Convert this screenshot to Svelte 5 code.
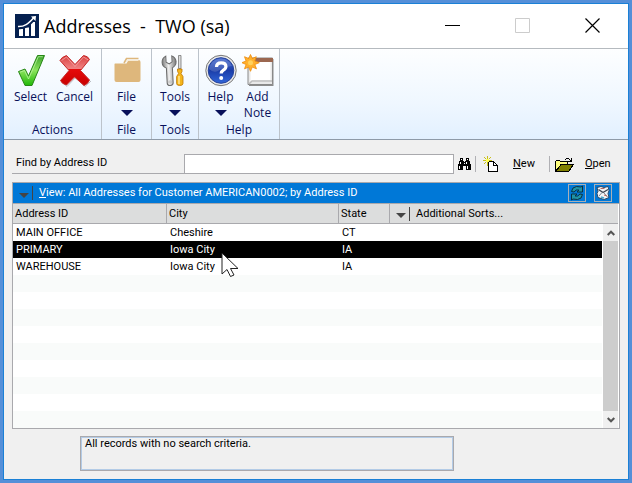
<script>
  const rows = [
    { id: 'MAIN OFFICE', city: 'Cheshire', state: 'CT' },
    { id: 'PRIMARY', city: 'Iowa City', state: 'IA', selected: true },
    { id: 'WAREHOUSE', city: 'Iowa City', state: 'IA' },
    ...Array.from({ length: 9 }, () => ({ id: '', city: '', state: '' }))
  ];
  let query = $state('');
</script>

<div class="desktop">
  <main class="window">
    <header class="titlebar">
      <svg class="logo" width="24" height="24" viewBox="0 0 24 24">
        <rect width="24" height="24" fill="#05204f" />
        <path d="M4 14.5h4V22H4zM10 13.5h4V22h-4zM16 8h4v14h-4z" fill="#fff" />
        <path d="M4 13.2c6 .3 9-2.200 14-7.800" fill="none" stroke="#05204f" stroke-width="4" />
        <path d="M3 12.600c6.500.3 10-2.600 15.500-8.600" fill="none" stroke="#fff" stroke-width="1.500" />
        <path d="M16 2.500l5-.5-.5 5z" fill="#fff" />
      </svg>
      <h1>Addresses &nbsp;-&nbsp; TWO (sa)</h1>
      <div class="caption">
        <button aria-label="Minimize">
          <svg width="16" height="16" viewBox="0 0 16 16"><path d="M0 7.500h15" stroke="#000" /></svg>
        </button>
        <button aria-label="Maximize" disabled>
          <svg width="16" height="16" viewBox="0 0 16 16"><path d="M.5.5h14v14H.5z" fill="none" stroke="#ccc" /></svg>
        </button>
        <button aria-label="Close">
          <svg width="16" height="16" viewBox="0 0 16 16"><path d="M.5.5l14 14M14.500.5l-14 14" stroke="#000" stroke-width="1.200" /></svg>
        </button>
      </div>
    </header>

    <nav class="ribbon">
      <section class="group actions">
        <div class="tools">
          <button class="tool">
            <svg width="32" height="34" viewBox="0 0 32 34">
              <defs><linearGradient id="g1" x1="0" y1="0" x2="0" y2="1"><stop offset="0" stop-color="#3da32c" /><stop offset=".5" stop-color="#8be35d" /><stop offset="1" stop-color="#20b808" /></linearGradient></defs>
              <path d="M3.500 18.500l6.500-2.500 3.500 7L22.500 2.500h7L17 32.500h-7z" fill="url(#g1)" stroke="#278716" stroke-width="1" stroke-linejoin="round" />
              <path d="M5 19.200l4.500-1.700 4 8.500L23.300 3.700h4.500" fill="none" stroke="#b9f29e" stroke-width=".8" />
            </svg>
            <span>Select</span>
          </button>
          <button class="tool">
            <svg width="32" height="34" viewBox="0 0 32 34">
              <defs><linearGradient id="r1" x1="0" y1="0" x2="0" y2="1"><stop offset="0" stop-color="#d94040" /><stop offset=".45" stop-color="#f18484" /><stop offset=".46" stop-color="#e60b0b" /><stop offset="1" stop-color="#c80000" /></linearGradient></defs>
              <path d="M2 28.500l6 5L17 24l9 9.500 6-5.500" fill="none" stroke="#b9bdc3" stroke-width="1" />
              <path d="M1 7.500Q2.500 4 7.500 2.500L16 11.500 24.500 2.500Q29 3 30.500 6.500L21.500 17.500 30.500 27Q29 31 25 32.500L15.500 24 7.500 32Q3 31 1.500 27.500L10 17.500z" fill="url(#r1)" stroke="#c52a2a" stroke-width="1" stroke-linejoin="round" />
              <path d="M2.500 7.500l5-3.500 8.500 9.500L24.500 4l4.500 2.800" fill="none" stroke="#f4a6a6" stroke-width=".8" />
            </svg>
            <span>Cancel</span>
          </button>
        </div>
        <h2>Actions</h2>
      </section>

      <section class="group file">
        <div class="tools">
          <button class="tool">
            <svg width="32" height="34" viewBox="0 0 32 34">
              <path d="M4 10.500h11.500l2-3.500h10q2 0 2 2v18q0 2-2 2H5.500q-2 0-2-2V11z" fill="#deb77c" />
              <path d="M13 10l2.500-4.500h12" fill="none" stroke="#deb77c" stroke-width="1.600" />
              <path d="M15 9.500l1.500-2h11" fill="none" stroke="#f6ead5" stroke-width="1" />
            </svg>
            <span>File</span>
            <i class="drop"></i>
          </button>
        </div>
        <h2>File</h2>
      </section>

      <section class="group kit">
        <div class="tools">
          <button class="tool">
            <svg width="32" height="34" viewBox="0 0 32 34">
              <defs><linearGradient id="w1"><stop offset="0" stop-color="#777" /><stop offset=".45" stop-color="#f1f1f1" /><stop offset="1" stop-color="#777" /></linearGradient></defs>
              <path d="M7.500 3v6l3 2 3-2V3q4 2 4 6t-4 6v15q0 2.500-3 2.500t-3-2.500V15q-4-2-4-6t4-6z" transform="rotate(-3 10 17)" fill="url(#w1)" stroke="#6a6a6a" />
              <circle cx="11" cy="29" r="1.100" fill="#fff" stroke="#888" stroke-width=".5" />
              <path d="M19.500 2.500h2.500v13h-2.500z" fill="#ddd" stroke="#777" stroke-width=".8" />
              <path d="M18.500 16h4.500v2.500l-1 2 2 3v7q0 2-3.200 2t-3.200-2v-7l2-3-1-2z" fill="#f4b51c" stroke="#bf7700" stroke-width=".8" />
              <path d="M20 23v8" stroke="#ffe793" stroke-width="1.500" />
            </svg>
            <span>Tools</span>
            <i class="drop"></i>
          </button>
        </div>
        <h2>Tools</h2>
      </section>

      <section class="group help">
        <div class="tools">
          <button class="tool">
            <svg width="32" height="34" viewBox="0 0 32 34">
              <defs><linearGradient id="b1" x1="0" y1="0" x2="0" y2="1"><stop offset="0" stop-color="#4065cc" /><stop offset=".5" stop-color="#1b3da8" /><stop offset="1" stop-color="#3166d9" /></linearGradient></defs>
              <circle cx="16" cy="17.500" r="15.200" fill="#e9e9e9" stroke="#777" />
              <circle cx="16" cy="17.500" r="12.800" fill="url(#b1)" stroke="#24419b" />
              <path d="M4 16a12 12 0 0 1 23-3Q18 14 13 18q-5 2-9-2z" fill="#fff" opacity=".16" />
              <path d="M11.500 14q0-4.200 4.700-4.200t4.700 3.700q0 2.200-2.600 3.700-2.100 1.300-2.100 3.300" fill="none" stroke="#fff" stroke-width="3.200" />
              <circle cx="16.200" cy="25" r="2" fill="#fff" />
            </svg>
            <span>Help</span>
            <i class="drop"></i>
          </button>
          <button class="tool">
            <svg width="32" height="34" viewBox="0 0 32 34">
              <path d="M7 6h24.500v27H7z" fill="#8c8c8c" />
              <path d="M6 5h24.500v26.500H6z" fill="#e9e9e9" stroke="#898989" />
              <path d="M8.500 9h20v20h-20z" fill="#fff" />
              <path d="M6 5h25v4H6z" fill="#9b6750" />
              <path d="M7 31l3-3h20" fill="none" stroke="#bbb" stroke-width="1.500" />
              <path d="M8.500 1.500l1.800 4 4-1.800-1.500 4.300 4.500 1.700-4.500 1.800 1.700 4.300-4.200-1.700-1.800 4.200-1.800-4.200-4.200 1.700 1.600-4.300-4.300-1.800 4.300-1.700-1.600-4.300 4.200 1.800z" fill="#ffb02c" stroke="#ee8b0c" stroke-width=".8" />
              <circle cx="8.500" cy="9.700" r="2.500" fill="#ffd15d" />
            </svg>
            <span>Add<br />Note</span>
          </button>
        </div>
        <h2>Help</h2>
      </section>
    </nav>

    <div class="search">
      <label for="find">Find by Address ID</label>
      <input id="find" type="text" bind:value={query} />
      <button class="find" aria-label="Find">
        <svg width="13" height="13" viewBox="0 0 13 13" shape-rendering="crispEdges">
          <path d="M2 0h3v3h1v1h1V3h1V0h3v3h1v3h1v6H8V8H5v4H0V6h1V3h1z" fill="#000" />
          <path d="M3 1h1v1H3zM2 4h1v2H2zM1 8h1v3H1zM9 1h1v1H9zM8 4h1v2H8zM9 8h1v3H9zM6 5h1v1H6z" fill="#fff" />
        </svg>
      </button>
      <button class="command">
        <svg width="15" height="16" viewBox="0 0 15 16" shape-rendering="crispEdges">
          <path d="M5.500 5.500h5l4 4v5.500h-9z" fill="#fff" stroke="#000" />
          <path d="M10.500 5v4.500H15" fill="none" stroke="#000" />
          <path d="M4 0h1v3H4zM4 6h1v4H4zM0 4h3v1H0zM6 4h3v1H6zM1 1h1v1H1zM2 2h1v1H2zM7 1h1v1H7zM6 2h1v1H6zM2 6h1v1H2zM1 7h1v1H1z" fill="#c9c01c" />
          <path d="M3 3h3v3H3z" fill="#ffff52" />
        </svg>
        <span><u>N</u>ew</span>
      </button>
      <button class="command open">
        <svg width="19" height="15" viewBox="0 0 19 15" shape-rendering="crispEdges">
          <path d="M.5 14V4.500l1-1h3l1 1h7V8H7z" fill="#ffff80" stroke="#000" />
          <path d="M1 14.500L6 7.500h12.500l-5 7z" fill="#808000" stroke="#000" />
          <path d="M11 1h3v1h-3zM10 2h1v1h-1zM14 2h1v1h-1zM16 1h1v4h-4V4h2V3h1z" fill="#000" />
        </svg>
        <span><u>O</u>pen</span>
      </button>
    </div>

    <section class="panel">
      <div class="view">
        <i class="arrow"></i><i class="bar"></i>
        <button class="viewname"><u>V</u>iew: All Addresses for Customer AMERICAN0002; by Address ID</button>
        <button class="square" aria-label="Refresh">
          <svg width="16" height="16" viewBox="0 0 16 16">
            <path d="M2.500 6.500Q3 2 7.500 1.500L12 2l1.500-1v6H8l2-2Q7 4 5 7z" fill="#1f93a6" stroke="#0b3040" />
            <path d="M13.500 9.500Q13 14 8.500 14.500L4 14l-1.500 1V9H8l-2 2q3 1 5-2z" fill="#1f93a6" stroke="#0b3040" />
          </svg>
        </button>
        <button class="square" aria-label="Reminder">
          <svg width="16" height="16" viewBox="0 0 16 16">
            <path d="M2 2.500l4-1 3 1 4-1 1 4-1 3 1 4-5 2-6-2-1-4 1-2z" fill="#f2f4f6" stroke="#2c4a6a" />
            <path d="M3.500 4.500l4.500 3 5-3" fill="none" stroke="#3c4450" stroke-width="1.400" />
            <path d="M4 11l3-3.500M9 8l3.500 4" fill="none" stroke="#7b8794" />
            <path d="M5.500 3.500h4M9 10l3 1" stroke="#b86a5c" />
            <path d="M6 12l3 1" stroke="#4aa8cc" stroke-width="1.500" />
          </svg>
        </button>
      </div>
      <div class="list">
        <table>
          <colgroup><col class="c1" /><col class="c2" /><col class="c3" /><col /></colgroup>
          <thead>
            <tr>
              <th>Address ID</th><th>City</th><th>State</th>
              <th><div class="sorts"><i class="arrow"></i><i class="bar"></i><span>Additional Sorts...</span></div></th>
            </tr>
          </thead>
          <tbody>
            {#each rows as row}
              <tr class:selected={row.selected}>
                <td>{row.id}</td><td>{row.city}</td><td>{row.state}</td><td></td>
              </tr>
            {/each}
          </tbody>
        </table>
        <div class="scroll">
          <button aria-label="Scroll up">
            <svg width="8" height="6" viewBox="0 0 8 6"><path d="M.7 5L4 1.700 7.300 5" fill="none" stroke="#555" stroke-width="2" /></svg>
          </button>
          <div class="thumb"></div>
          <button aria-label="Scroll down">
            <svg width="8" height="6" viewBox="0 0 8 6"><path d="M.7 1L4 4.300 7.300 1" fill="none" stroke="#555" stroke-width="2" /></svg>
          </button>
        </div>
      </div>
    </section>

    <output class="status">All records with no search criteria.</output>
  </main>

  <svg class="pointer" width="19" height="26" viewBox="0 0 19 26">
    <path d="M1 1v21l5-4.500 3.500 7 3.500-1.500-3.500-6.500H17z" fill="#fff" stroke="#222" />
  </svg>
</div>

<style>
  :global(body) { margin: 0; }
  .desktop {
    box-sizing: border-box;
    min-height: 100vh;
    padding: 3px;
    display: flex;
    background: #558fd8;
    position: relative;
    font: 11px/16px Roboto, "Liberation Sans", Arial, sans-serif;
    color: #000;
  }
  .window {
    flex: 1;
    min-width: 0;
    display: flex;
    flex-direction: column;
    background: #f0f0f0;
    border: 1px solid #1a80d6;
  }
  button {
    font: inherit;
    color: inherit;
    border: 0;
    padding: 0;
    background: none;
    text-align: left;
  }
  svg { display: block; flex: none; }

  .titlebar {
    height: 44px;
    display: flex;
    align-items: center;
    background: #fff;
    padding-left: 11px;
  }
  h1 {
    flex: 1;
    margin: 0 0 0 5px;
    font: 400 18px/28px "Open Sans", "Noto Sans", sans-serif;
    white-space: pre;
  }
  .caption { display: flex; align-self: stretch; }
  .caption button { width: 70px; display: grid; place-items: center; }

  .ribbon {
    display: flex;
    height: 90px;
    border-top: 1px solid #b5babf;
    border-bottom: 1px solid #8e9aa8;
    background: linear-gradient(#fdfeff, #eff7ff 60%, #e2f0ff);
    font: 12px/16px "Open Sans", "Noto Sans", sans-serif;
    color: #08105a;
  }
  .group {
    display: flex;
    flex-direction: column;
    justify-content: space-between;
    border-right: 1px solid #bcc3cb;
    box-sizing: border-box;
  }
  .actions { width: 98px; }
  .file { width: 50px; }
  .kit { width: 47px; }
  .help { width: 81px; }
  .tools { display: flex; justify-content: center; }
  .tool {
    display: flex;
    flex-direction: column;
    align-items: center;
    padding-top: 4px;
    text-align: center;
    width: 37px;
  }
  .actions .tool { width: 44px; }
  .tool span { margin-top: 2px; }
  .drop {
    margin-top: 5px;
    border: 6px solid transparent;
    border-top-color: #08105a;
    border-bottom: 0;
  }
  h2 { margin: 0 0 1px; font: inherit; text-align: center; }

  .search {
    display: flex;
    align-items: center;
    margin: 14px 9px 0 8px;
    height: 20px;
  }
  label {
    width: 168px;
    height: 19px;
    line-height: 18px;
    padding-left: 4px;
    border-bottom: 1px solid #a9a9ad;
  }
  input {
    flex: 1;
    min-width: 0;
    height: 20px;
    box-sizing: border-box;
    border: 1px solid #a9a9ad;
    background: #fff;
    font: inherit;
    padding: 0 3px;
  }
  .find { padding: 0 4px; }
  .command {
    display: flex;
    align-items: center;
    gap: 15px;
    border-left: 1px solid #b0b0b4;
    height: 16px;
    width: 74px;
    padding-left: 7px;
    box-sizing: border-box;
  }
  .open { width: 70px; padding-left: 5px; gap: 11px; }

  .panel {
    margin: 8px 8px 0;
    border: 1px solid #a9a9ad;
    background: #fff;
  }
  .view {
    display: flex;
    align-items: center;
    height: 20px;
    padding: 0 7px 0 6px;
    background: #0078d7;
    color: #fff;
    border-bottom: 1px solid #a9a9ad;
  }
  .viewname { flex: 1; margin-left: 6px; white-space: nowrap; }
  .arrow {
    margin-top: 4px;
    border: 5px solid transparent;
    border-top-color: #444;
    border-bottom: 0;
  }
  .bar { width: 1px; height: 14px; margin-left: 3px; background: #444; }
  .square {
    border: 1px solid #a9b0b8;
    margin-left: 8px;
  }
  .list {
    display: grid;
    grid-template-columns: minmax(0, 1fr) 16px;
    grid-template-rows: 20px 1fr;
    padding-right: 1px;
  }
  table {
    grid-area: 1 / 1 / 3 / 3;
    width: 100%;
    border-collapse: separate;
    border-spacing: 0;
    table-layout: fixed;
  }
  .c1 { width: 154px; }
  .c2 { width: 172px; }
  .c3 { width: 51px; }
  th {
    height: 19px;
    padding: 0 2px;
    text-align: left;
    font-weight: 400;
    line-height: 18px;
    background: #dcdddd;
    border-right: 1px solid #a9a9ad;
    border-bottom: 1px solid #a9a9ad;
  }
  th:last-child { border-right: 0; }
  .sorts { display: flex; align-items: center; padding-left: 4px; }
  .sorts span { margin-left: 6px; }
  td { height: 17px; padding: 0 3px; line-height: 17px; }
  tbody tr:nth-child(even) { background: #f9fbfa; }
  tbody tr.selected { background: #000; color: #fff; }
  .scroll {
    grid-area: 2 / 2;
    display: flex;
    flex-direction: column;
    background: #f0f0f0;
    border-left: 1px solid #fff;
  }
  .scroll button { height: 17px; display: grid; place-items: center; }
  .thumb { flex: 1; background: #cdcdcd; }

  .status {
    display: block;
    box-sizing: border-box;
    margin: 7px 174px 8px 76px;
    height: 35px;
    padding: 0 4px;
    line-height: 14px;
    border: 1px solid #a9a9ad;
    box-shadow: inset 0 0 0 1px #b3cbe6;
  }
  .pointer { position: absolute; left: 221px; top: 252px; }
</style>
